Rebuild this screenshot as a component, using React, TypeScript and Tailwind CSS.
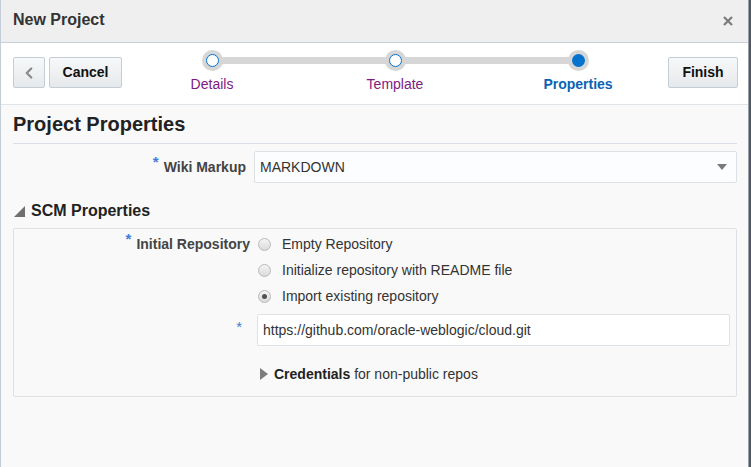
import { ChevronLeft } from "lucide-react"

function Req() {
  return <span className="text-[#3d7fd6] text-[15px] relative -top-[5px] mr-[5px]">*</span>
}

function Radio({ checked, label }: { checked?: boolean; label: string }) {
  return (
    <div className="h-[26px] flex items-center">
      <span className="w-[13px] h-[13px] rounded-full border border-[#b9b9b9] bg-gradient-to-b from-[#f4f4f4] to-[#dadada] flex items-center justify-center">
        {checked && <span className="w-[5px] h-[5px] rounded-full bg-[#505050]" />}
      </span>
      <span className="ml-[11px] text-[14px] text-[#333]">{label}</span>
    </div>
  )
}

function Step({ label, state }: { label: string; state: "visited" | "current" }) {
  return (
    <div className="w-[100px] flex flex-col items-center">
      <div className="w-[21px] h-[21px] rounded-full bg-[#d6d6d6] flex items-center justify-center relative z-10">
        {state === "current" ? (
          <span className="w-[13px] h-[13px] rounded-full bg-[#0572ce]" />
        ) : (
          <span className="w-[13px] h-[13px] rounded-full bg-white border border-[#0572ce]" />
        )}
      </div>
      <div className={`mt-[3px] text-[14px] ${state === "current" ? "font-bold text-[#0a64b4]" : "text-[#7f1a82]"}`}>{label}</div>
    </div>
  )
}

const btn = "h-[31px] rounded-[2px] border border-[#c5ced7] bg-gradient-to-b from-[#f7f8f9] to-[#e6e9eb] flex items-center justify-center"

export default function App() {
  return (
    <div className="w-[751px] h-[467px] bg-[#4f5862] flex overflow-hidden" style={{ fontFamily: '"Liberation Sans", Arial, sans-serif' }}>
      <div className="w-[749px] h-full border-l border-r border-l-[#c5ced8] border-r-[#9aa1a8] bg-[#f9f9f9] flex flex-col">
        <div className="h-[43px] bg-[#efefef] border-b border-[#c8d1da] flex items-center justify-between pl-[12px] pr-[15px] shrink-0">
          <div className="text-[16px] font-bold text-[#333] -mt-[2px]">New Project</div>
          <svg width="10" height="10" viewBox="0 0 10 10" className="-mt-[1px]">
            <path d="M1 1 L9 9 M9 1 L1 9" stroke="#7b7b7b" strokeWidth="2.2" />
          </svg>
        </div>

        <div className="h-[62px] bg-white border-b border-[#dfe4e9] flex items-start pl-[12px] pr-[10px] pt-[14px] shrink-0">
          <div className={`${btn} w-[32px]`}>
            <ChevronLeft className="w-[18px] h-[18px] text-[#8a8a8a]" strokeWidth={3} />
          </div>
          <div className={`${btn} w-[73px] ml-[4px] text-[14px] font-bold text-[#111]`}>Cancel</div>
          <div className="relative flex gap-[83px] ml-[40px] -mt-[7px]">
            <div className="absolute left-[50px] right-[50px] top-[7px] h-[7px] bg-[#d6d6d6]" />
            <Step label="Details" state="visited" />
            <Step label="Template" state="visited" />
            <Step label="Properties" state="current" />
          </div>
          <div className="flex-1" />
          <div className={`${btn} w-[70px] text-[14px] font-bold text-[#111]`}>Finish</div>
        </div>

        <div className="flex-1 px-[12px] pr-[11px]">
          <div className="h-[39px] border-b border-[#d9dfe5] flex items-center text-[20px] font-bold text-[#222]">Project Properties</div>

          <div className="flex items-center mt-[7px]">
            <div className="w-[233px] flex justify-end items-center text-[14px] font-bold text-[#444]">
              <Req />Wiki Markup
            </div>
            <div className="ml-[8px] flex-1 h-[32px] bg-[#fcfdfe] border border-[#dde2e7] rounded-[2px] flex items-center justify-between pl-[5px] pr-[9px] text-[14px] text-[#333]">
              <span>MARKDOWN</span>
              <svg width="10" height="6" viewBox="0 0 10 6"><path d="M0 0 L10 0 L5 6 Z" fill="#7a7a7a" /></svg>
            </div>
          </div>

          <div className="flex items-center mt-[18px] h-[20px]">
            <svg width="11" height="11" viewBox="0 0 11 11" className="ml-[1px]"><path d="M11 0 L11 11 L0 11 Z" fill="#6f6f6f" /></svg>
            <span className="ml-[6px] text-[16px] font-bold text-[#222]">SCM Properties</span>
          </div>

          <div className="mt-[7px] border border-[#dde1e5] rounded-[2px] bg-[#f9f9f9] pt-[2px] pb-[11px]">
            <div className="flex">
              <div className="w-[236px] h-[26px] flex justify-end items-center text-[14px] font-bold text-[#444]">
                <Req />Initial Repository
              </div>
              <div className="ml-[8px]">
                <Radio label="Empty Repository" />
                <Radio label="Initialize repository with README file" />
                <Radio checked label="Import existing repository" />
              </div>
            </div>
            <div className="flex items-center mt-[5px]">
              <div className="w-[236px] flex justify-end text-[14px]">
                <span className="text-[#3d7fd6] text-[15px] relative -top-[3px] mr-[8px]">*</span>
              </div>
              <div className="ml-[7px] mr-[6px] flex-1 h-[32px] bg-white border border-[#dde2e7] rounded-[2px] flex items-center pl-[5px] text-[14px] text-[#333]">
                https://github.com/oracle-weblogic/cloud.git
              </div>
            </div>
            <div className="flex items-center mt-[17px] h-[22px] pl-[246px]">
              <svg width="8" height="12" viewBox="0 0 8 12"><path d="M0 0 L8 6 L0 12 Z" fill="#7d7d7d" /></svg>
              <span className="ml-[6px] text-[14px] text-[#333]"><b className="text-[#222]">Credentials</b> for non-public repos</span>
            </div>
          </div>
        </div>
      </div>
    </div>
  )
}
